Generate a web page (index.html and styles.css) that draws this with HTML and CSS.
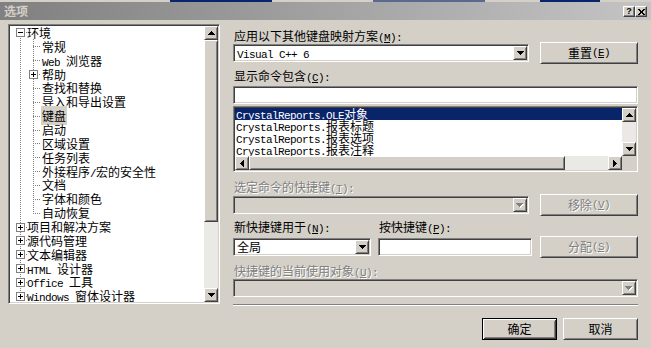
FILE: index.html
```html
<!DOCTYPE html>
<html>
<head>
<meta charset="utf-8">
<link rel="stylesheet" href="styles.css">
</head>
<body>
<div class="topstrip"><span class="ts ts1"></span><span class="ts ts2"></span><span class="ts ts3"></span></div>
<div class="titlebar">
  <span class="title">选项</span>
  <div class="tbtns">
    <span class="tbtn"><span class="q">?</span></span>
    <span class="tbtn"><svg width="7" height="6" viewBox="0 0 7 6"><path d="M0 0h2v1h-2zM5 0h2v1h-2zM1 1h2v1h-2zM4 1h2v1h-2zM2 2h3v2h-3zM1 4h2v1h-2zM4 4h2v1h-2zM0 5h2v1h-2zM5 5h2v1h-2z" fill="#000"/></svg></span>
  </div>
</div>
<div class="content">
  <div class="tree sunken">
    <div class="tree-list">
      <svg class="tree-lines" width="194" height="276" viewBox="0 0 194 276">
        <g stroke="#808080" stroke-width="1" stroke-dasharray="1 1" fill="none" shape-rendering="crispEdges">
          <path d="M10.5 6V271"/>
          <path d="M23.5 13V188"/>
          <path d="M10 6.5H17M10 201.5H17M10 214.5H17M10 228.5H17M10 242.5H17M10 256.5H17M10 270.5H17"/>
          <path d="M23 20.5H30M23 34.5H30M23 48.5H30M23 62.5H30M23 76.5H30M23 90.5H30M23 104.5H30M23 117.5H30M23 131.5H30M23 145.5H30M23 159.5H30M23 173.5H30M23 187.5H30"/>
        </g>
        <g shape-rendering="crispEdges">
          <g fill="#fff" stroke="#808080">
            <rect x="6.5" y="2.5" width="8" height="8"/>
            <rect x="19.5" y="44.5" width="8" height="8"/>
            <rect x="6.5" y="197.5" width="8" height="8"/>
            <rect x="6.5" y="210.5" width="8" height="8"/>
            <rect x="6.5" y="224.5" width="8" height="8"/>
            <rect x="6.5" y="238.5" width="8" height="8"/>
            <rect x="6.5" y="252.5" width="8" height="8"/>
            <rect x="6.5" y="266.5" width="8" height="8"/>
          </g>
          <g stroke="#000" fill="none">
            <path d="M8 6.5H13"/>
            <path d="M21 48.5H26M23.5 46V51"/>
            <path d="M8 201.5H13M10.5 199V204"/>
            <path d="M8 214.5H13M10.5 212V217"/>
            <path d="M8 228.5H13M10.5 226V231"/>
            <path d="M8 242.5H13M10.5 240V245"/>
            <path d="M8 256.5H13M10.5 254V259"/>
            <path d="M8 270.5H13M10.5 268V273"/>
          </g>
        </g>
      </svg>
      <div class="ti l0">环境</div>
      <div class="ti l1">常规</div>
      <div class="ti l1"><span class="m">Web </span>浏览器</div>
      <div class="ti l1">帮助</div>
      <div class="ti l1">查找和替换</div>
      <div class="ti l1">导入和导出设置</div>
      <div class="ti l1"><span class="tsel">键盘</span></div>
      <div class="ti l1">启动</div>
      <div class="ti l1">区域设置</div>
      <div class="ti l1">任务列表</div>
      <div class="ti l1">外接程序<span class="m">/</span>宏的安全性</div>
      <div class="ti l1">文档</div>
      <div class="ti l1">字体和颜色</div>
      <div class="ti l1">自动恢复</div>
      <div class="ti l0">项目和解决方案</div>
      <div class="ti l0">源代码管理</div>
      <div class="ti l0">文本编辑器</div>
      <div class="ti l0"><span class="m">HTML </span>设计器</div>
      <div class="ti l0"><span class="m">Office </span>工具</div>
      <div class="ti l0"><span class="m">Windows </span>窗体设计器</div>
    </div>
    <div class="vscroll">
      <div class="sbtn raised"><svg width="7" height="4" viewBox="0 0 7 4"><path d="M3 0h1v1h-1zM2 1h3v1h-3zM1 2h5v1h-5zM0 3h7v1h-7z" fill="#000"/></svg></div>
      <div class="thumb raised"></div>
      <div class="track"></div>
      <div class="sbtn raised"><svg width="7" height="4" viewBox="0 0 7 4"><path d="M0 0h7v1h-7zM1 1h5v1h-5zM2 2h3v1h-3zM3 3h1v1h-1z" fill="#000"/></svg></div>
    </div>
  </div>

  <div class="panel">
    <div class="lbl">应用以下其他键盘映射方案<span class="m">(<u>M</u>):</span></div>
    <div class="row r-b">
      <div class="combo sunken w-main">
        <span class="val"><span class="m">Visual C++ 6</span></span>
        <span class="dd raised"><svg width="7" height="4" viewBox="0 0 7 4"><path d="M0 0h7v1h-7zM1 1h5v1h-5zM2 2h3v1h-3zM3 3h1v1h-1z" fill="#000"/></svg></span>
      </div>
      <div class="btn raised">重置<span class="m">(<u>E</u>)</span></div>
    </div>
    <div class="lbl r-c">显示命令包含<span class="m">(<u>C</u>):</span></div>
    <div class="field sunken r-d"></div>
    <div class="list sunken r-e">
      <div class="items">
        <div class="li sel"><span class="m">CrystalReports.OLE</span>对象</div>
        <div class="li"><span class="m">CrystalReports.</span>报表标题</div>
        <div class="li"><span class="m">CrystalReports.</span>报表选项</div>
        <div class="li"><span class="m">CrystalReports.</span>报表注释</div>
      </div>
      <div class="lvs">
        <div class="sbtn raised"><svg width="7" height="4" viewBox="0 0 7 4"><path d="M3 0h1v1h-1zM2 1h3v1h-3zM1 2h5v1h-5zM0 3h7v1h-7z" fill="#000"/></svg></div>
        <div class="track"></div>
        <div class="sbtn raised"><svg width="7" height="4" viewBox="0 0 7 4"><path d="M0 0h7v1h-7zM1 1h5v1h-5zM2 2h3v1h-3zM3 3h1v1h-1z" fill="#000"/></svg></div>
      </div>
      <div class="lhs">
        <div class="sbtn hbtn raised"><svg width="4" height="7" viewBox="0 0 4 7"><path d="M3 0h1v7h-1zM2 1h1v5h-1zM1 2h1v3h-1zM0 3h1v1h-1z" fill="#000"/></svg></div>
        <div class="hthumb raised"></div>
        <div class="track"></div>
        <div class="sbtn hbtn raised"><svg width="4" height="7" viewBox="0 0 4 7"><path d="M0 0h1v7h-1zM1 1h1v5h-1zM2 2h1v3h-1zM3 3h1v1h-1z" fill="#000"/></svg></div>
      </div>
      <div class="corner"></div>
    </div>
    <div class="lbl dis r-f">选定命令的快捷键<span class="m">(<u>T</u>):</span></div>
    <div class="row">
      <div class="combo sunken disabled w-main">
        <span class="val"></span>
        <span class="dd raised"><svg width="8" height="5" viewBox="0 0 8 5"><path d="M1 1h7v1h-7zM2 2h5v1h-5zM3 3h3v1h-3zM4 4h1v1h-1z" fill="#fff"/><path d="M0 0h7v1h-7zM1 1h5v1h-5zM2 2h3v1h-3zM3 3h1v1h-1z" fill="#808080"/></svg></span>
      </div>
      <div class="btn raised dis">移除<span class="m">(<u>V</u>)</span></div>
    </div>
    <div class="lblrow r-h">
      <span class="lbl lbl-n">新快捷键用于<span class="m">(<u>N</u>):</span></span>
      <span class="lbl">按快捷键<span class="m">(<u>P</u>):</span></span>
    </div>
    <div class="row r-i">
      <div class="combo sunken w-scope">
        <span class="val">全局</span>
        <span class="dd raised"><svg width="7" height="4" viewBox="0 0 7 4"><path d="M0 0h7v1h-7zM1 1h5v1h-5zM2 2h3v1h-3zM3 3h1v1h-1z" fill="#000"/></svg></span>
      </div>
      <div class="field sunken w-key"></div>
      <div class="btn raised dis">分配<span class="m">(<u>S</u>)</span></div>
    </div>
    <div class="lbl dis r-j">快捷键的当前使用对象<span class="m">(<u>U</u>):</span></div>
    <div class="combo sunken disabled r-k">
      <span class="val"></span>
      <span class="dd raised"><svg width="8" height="5" viewBox="0 0 8 5"><path d="M1 1h7v1h-7zM2 2h5v1h-5zM3 3h3v1h-3zM4 4h1v1h-1z" fill="#fff"/><path d="M0 0h7v1h-7zM1 1h5v1h-5zM2 2h3v1h-3zM3 3h1v1h-1z" fill="#808080"/></svg></span>
    </div>
    <div class="sep"></div>
    <div class="actions">
      <div class="btn raised default">确定</div>
      <div class="btn raised">取消</div>
    </div>
  </div>
</div>
</body>
</html>
```
FILE: styles.css
```css
* {
  box-sizing: border-box;
  margin: 0;
  padding: 0;
}

html, body {
  width: 651px;
  height: 348px;
  overflow: hidden;
}

body {
  background: #d4d0c8;
  font-family: "Noto Sans CJK SC", sans-serif;
  font-size: 12px;
  color: #000;
}

.m {
  font-family: "Liberation Mono", monospace;
  font-size: 11px;
  letter-spacing: -0.6px;
}

u {
  text-decoration: underline;
}

/* bevels */
.raised {
  background: #d4d0c8;
  border: 1px solid;
  border-color: #fff #404040 #404040 #fff;
  box-shadow: inset 1px 1px #d4d0c8, inset -1px -1px #808080;
}

.sunken {
  border: 1px solid;
  border-color: #808080 #fff #fff #808080;
  padding: 1px;
  box-shadow: inset 1px 1px #404040, inset -1px -1px #d4d0c8;
}

/* top strip + title */
.topstrip {
  height: 2px;
  display: flex;
  background: #d4d0c8;
}

.ts {
  height: 2px;
  background: #0a246a;
}

.ts1 { margin-left: 170px; width: 102px; }
.ts2 { margin-left: 101px; width: 112px; opacity: 0.6; }
.ts3 { margin-left: 55px; width: 60px; }

.titlebar {
  height: 18px;
  display: flex;
  align-items: center;
  justify-content: space-between;
  padding: 0 4px 0 4px;
  background: linear-gradient(to right, #808080, #c4c4c4);
}

.title {
  color: #d4d0c8;
  font-weight: bold;
  font-size: 12px;
  line-height: 18px;
}

.tbtns {
  display: flex;
  margin-top: 1px;
}

.tbtn {
  width: 12px;
  height: 11px;
  display: flex;
  align-items: center;
  justify-content: center;
  background: #d4d0c8;
  border: 1px solid;
  border-color: #fff #404040 #404040 #fff;
  box-shadow: inset -1px -1px #808080;
}

.q {
  font-family: "Liberation Sans", sans-serif;
  font-weight: bold;
  font-size: 9px;
  line-height: 9px;
}

/* content */
.content {
  display: flex;
  padding: 4px 0 0 8px;
  gap: 13px;
}

/* tree */
.tree {
  width: 212px;
  height: 280px;
  display: flex;
  background: #fff;
}

.tree-list {
  flex: 1;
  position: relative;
  background: #fff;
}

.tree-lines {
  position: absolute;
  left: 0;
  top: 0;
}

.ti {
  position: relative;
  height: 13.87px;
  line-height: 13.87px;
  white-space: nowrap;
}

.l0 { padding-left: 17px; }
.l1 { padding-left: 32px; }

.tsel {
  background: #d4d0c8;
  padding: 1px 1px;
  margin-left: -1px;
}

.vscroll {
  width: 14px;
  display: flex;
  flex-direction: column;
}

.sbtn {
  height: 14px;
  flex: none;
  display: flex;
  align-items: center;
  justify-content: center;
}

.thumb {
  height: 182px;
  flex: none;
}

.track {
  flex: 1;
  background: #ebe9e5;
}

/* right panel */
.panel {
  width: 405px;
  display: flex;
  flex-direction: column;
  padding-top: 5px;
}

.lbl {
  height: 14px;
  line-height: 14px;
  white-space: nowrap;
  padding-left: 1px;
}

.dis {
  color: #808080;
  text-shadow: 1px 1px 0 #fff;
}

.row {
  display: flex;
  align-items: center;
  height: 22px;
}

.r-b { margin-top: -1px; }
.r-c { margin-top: 5px; }
.r-d { margin-top: 3px; }
.r-e { margin-top: 2px; }
.r-f { margin-top: 8px; }
.r-h { margin-top: 4px; }
.r-i { margin-top: 2px; }
.r-j { margin-top: 6px; }
.r-k { margin-top: 1px; }

.combo {
  height: 18px;
  display: flex;
  background: #fff;
}

.combo.disabled {
  background: #d4d0c8;
}

.w-main { width: 296px; }
.w-scope { width: 138px; }

.val {
  flex: 1;
  line-height: 14px;
  padding-left: 2px;
  white-space: nowrap;
}

.dd {
  width: 14px;
  height: 14px;
  flex: none;
  display: flex;
  align-items: center;
  justify-content: center;
}

.field {
  height: 18px;
  background: #fff;
}

.w-key {
  width: 154px;
  margin-left: 7px;
}

.btn {
  width: 98px;
  height: 22px;
  margin-left: auto;
  display: flex;
  align-items: center;
  justify-content: center;
  white-space: nowrap;
  line-height: 1;
}

.btn.default {
  border-color: #000;
  box-shadow: inset 1px 1px #fff, inset -1px -1px #404040, inset 2px 2px #d4d0c8, inset -2px -2px #808080;
}

/* listbox */
.list {
  height: 66px;
  display: grid;
  grid-template-columns: 1fr 14px;
  grid-template-rows: 48px 14px;
  background: #fff;
}

.li {
  height: 12px;
  line-height: 12px;
  padding-left: 1px;
  white-space: nowrap;
}

.li.sel {
  background: #0a246a;
  color: #fff;
}

.lvs {
  display: flex;
  flex-direction: column;
}

.lhs {
  display: flex;
}

.hbtn {
  width: 14px;
}

.hthumb {
  width: 316px;
  flex: none;
}

.corner {
  background: #d4d0c8;
}

.lblrow {
  display: flex;
}

.lbl-n {
  width: 145px;
}

.sep {
  margin-top: 7px;
  height: 2px;
  border-top: 1px solid #808080;
  border-bottom: 1px solid #fff;
}

.actions {
  margin-top: 12px;
  display: flex;
  justify-content: flex-end;
  gap: 6px;
}

.actions .btn {
  width: 75px;
  margin-left: 0;
}
```
